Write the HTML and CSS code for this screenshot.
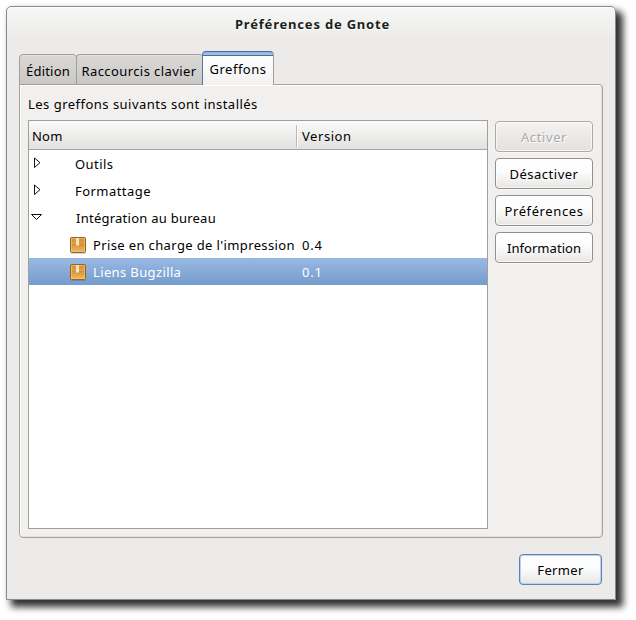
FILE: index.html
```html
<!DOCTYPE html>
<html lang="fr">
<head>
<meta charset="utf-8">
<title>Préférences de Gnote</title>
<link rel="stylesheet" href="styles.css">
</head>
<body>
<svg class="defs" width="0" height="0" aria-hidden="true">
  <defs>
    <linearGradient id="box" x1="0" y1="0" x2="0" y2="1"><stop offset="0" stop-color="#c98f3c"/><stop offset=".4" stop-color="#dda04a"/><stop offset=".5" stop-color="#d9983a"/><stop offset="1" stop-color="#efbb6c"/></linearGradient>
    <symbol id="package" viewBox="0 0 18 18">
      <path d="M2 17.5h15" stroke="#000" stroke-opacity=".15"/>
      <rect x="1.5" y="1.5" width="15" height="15" rx="1" fill="url(#box)" stroke="#9a6414"/>
      <path d="M2.5 15.5v-13h13v13z" fill="none" stroke="#f3cd8c" stroke-opacity=".55"/>
      <path d="M3 8.5h12" stroke="#c68634" stroke-opacity=".5"/>
      <path d="M7 2h3v7l-1 1-1-1-1 1z" fill="#f8e3bd"/>
    </symbol>
  </defs>
</svg>
<main class="window">
  <header class="title"><span>Préférences de Gnote</span></header>
  <nav class="tabs">
    <div class="tab first"><span>Édition</span></div>
    <div class="tab second"><span>Raccourcis clavier</span></div>
    <div class="tab active"><span>Greffons</span></div>
  </nav>
  <section class="panel">
    <p class="caption"><span>Les greffons suivants sont installés</span></p>
    <div class="content">
      <div class="tree">
        <div class="head"><div class="name">Nom</div><div class="version">Version</div></div>
        <div class="row group"><svg class="arrow" width="14" height="14"><path d="M5.5 2v9.5l5.5-4.8z"/></svg><span class="outils">Outils</span></div>
        <div class="row group"><svg class="arrow" width="14" height="14"><path d="M5.5 2v9.5l5.5-4.8z"/></svg><span class="format">Formattage</span></div>
        <div class="row group"><svg class="arrow" width="14" height="14"><path d="M2.5 4.5h10l-5 5z"/></svg><span class="integ">Intégration au bureau</span></div>
        <div class="row item"><svg class="icon" width="18" height="18"><use href="#package"/></svg><span class="label">Prise en charge de l'impression</span><span class="number">0.4</span></div>
        <div class="row item selected"><svg class="icon" width="18" height="18"><use href="#package"/></svg><span class="label">Liens Bugzilla</span><span class="number">0.1</span></div>
      </div>
      <aside class="actions">
        <button class="wide disabled" disabled><span>Activer</span></button>
        <button class="medium"><span>Désactiver</span></button>
        <button class="wide"><span>Préférences</span></button>
        <button class="tight"><span>Information</span></button>
      </aside>
    </div>
  </section>
  <footer class="footer"><button class="focused"><span>Fermer</span></button></footer>
</main>
</body>
</html>
```
FILE: styles.css
```css
* { box-sizing: border-box; }
html { height: 620px; background: #fff; overflow: hidden; }
body { height: 620px; margin: 0; padding: 6px; font: 13px/18px "Noto Sans", "Open Sans", sans-serif; color: #000; letter-spacing: .2px; white-space: nowrap; }
.defs { display: block; height: 0; }
.window { width: 610px; height: 594px; padding: 0 12px; border: 1px solid #8a8b88; border-radius: 5px 5px 0 0; background: linear-gradient(#f7f8f6, #ecebea 31px); box-shadow: inset 0 1px #fff, 6px 6px 7px 1px rgba(0,0,0,.8), 0 0 5px rgba(0,0,0,.08); }
.title { height: 44px; padding: 8px 0 0 3px; text-align: center; font-weight: 700; letter-spacing: .8px; color: #1b1f20; text-shadow: 0 1px #fff; }
.tabs { height: 34px; display: flex; align-items: flex-end; margin-bottom: -1px; position: relative; }
.tab { height: 31px; border: 1px solid #a09f9c; border-radius: 4px 4px 0 0; background: linear-gradient(#dad9d7, #cac8c5); padding-top: 7px; text-align: center; box-shadow: inset 0 1px #e5e4e2; }
.first { width: 58px; }
.second { width: 127px; margin-left: -1px; border-right: 0; padding-right: 2px; letter-spacing: .42px; }
.active { width: 72px; height: 34px; border-color: #4a6b9b #a09f9c transparent #5b7396; border-bottom: 0; padding-top: 8px; background: linear-gradient(#8fb1de 0, #a6c4ea 3px, #4a6b9b 3px, #4a6b9b 4px, #fff 4px, #f2f1f0 100%); box-shadow: none; margin-left: -1px; letter-spacing: .5px; }
.panel { height: 454px; padding: 10px 9px 8px 8px; border: 1px solid #a4a3a0; border-radius: 0 4px 4px 4px; background: #f1f0ee; box-shadow: inset 1px 1px #fff, inset -1px -1px #e0dfdd; }
.caption { margin: 0 0 7px; height: 18px; letter-spacing: .48px; }
.content { display: flex; gap: 7px; }
.tree { width: 460px; height: 409px; border: 1px solid #a09f9c; background: #fff; }
.head { height: 29px; display: flex; border-bottom: 1px solid #a6a5a3; background: linear-gradient(#fafafa, #e2e1df); line-height: 18px; padding-top: 4px; }
.name { width: 268px; height: 22px; padding: 2px 0 0 3px; border-right: 1px solid #bbbab8; }
.version { height: 22px; flex: 1; border-left: 1px solid #fff; padding: 2px 0 0 4px; letter-spacing: .55px; }
.row { height: 27px; display: flex; align-items: center; }
.arrow { width: 14px; height: 14px; margin-bottom: 2px; }
.arrow path { fill: #fff; stroke: #111; stroke-width: 1; }
.group span { margin-left: 32px; letter-spacing: .45px; }
.group .integ { margin-left: 33px; letter-spacing: .25px; }
.icon { margin-left: 40px; }
.label { flex: none; width: 215px; padding-left: 6px; letter-spacing: .37px; }
.number { letter-spacing: .8px; }
.selected { color: #fff; background: linear-gradient(#99b9e3, #759ccc); }
.actions { width: 98px; display: grid; grid-auto-rows: 31px; gap: 6px; align-content: start; padding-top: 1px; }
button { font: inherit; letter-spacing: .35px; color: #000; height: 31px; padding: 0; border: 1px solid #92908d; border-radius: 4px; background: linear-gradient(#fff 0, #fcfcfc 45%, #e7e6e4); box-shadow: inset 0 0 0 1px rgba(255,255,255,.65), 0 1px #f8f8f7; }
.medium { letter-spacing: .5px; }
.wide { letter-spacing: .6px; }
.tight { letter-spacing: .05px; }
button.disabled { color: #aaa9a6; text-shadow: 1px 1px #fff; background: linear-gradient(#f4f3f2, #e2e1df); border-color: #acaba8; }
.footer { display: flex; justify-content: flex-end; padding: 16px 1px 0 0; }
.focused { width: 83px; border-color: #5f82b2; box-shadow: inset 0 0 0 1px #bfd0e8, 0 0 1px #d4dfef; }
```
